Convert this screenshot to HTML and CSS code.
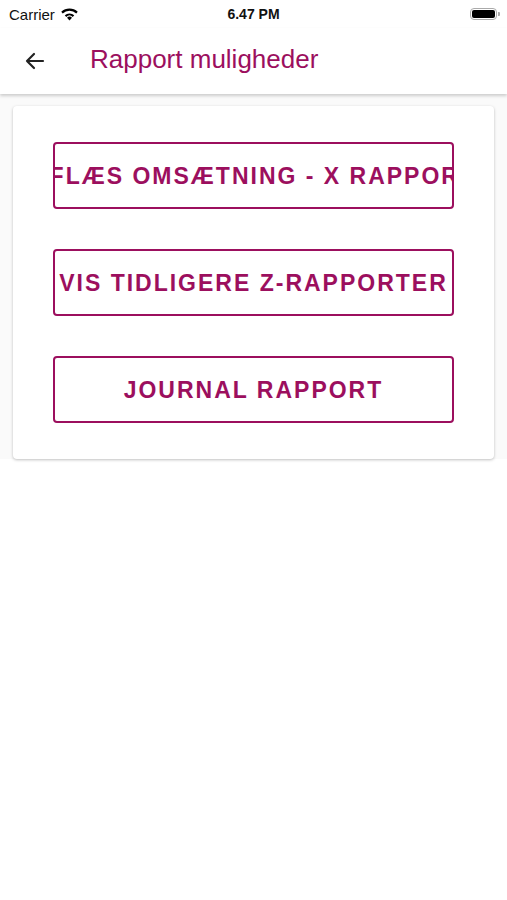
FILE: index.html
```html
<!DOCTYPE html>
<html lang="da">
<head>
    <meta charset="UTF-8">
    <meta name="viewport" content="width=device-width, initial-scale=1.0">
    <title>Rapport muligheder</title>
    <link rel="stylesheet" href="styles.css">
</head>
<body>
    <div class="status-bar">
        <div class="status-left">
            <span>Carrier</span>
            <svg class="wifi" viewBox="0 0 24 18" fill="#000">
                <path d="M12 17.5l3.2-3.6a4.6 4.6 0 0 0-6.4 0z"/>
                <path d="M12 8.2a9 9 0 0 1 6.1 2.4l-1.9 2.1a6.2 6.2 0 0 0-8.4 0l-1.9-2.1A9 9 0 0 1 12 8.2z"/>
                <path d="M12 2a15.5 15.5 0 0 1 10.6 4.2l-1.9 2.1a12.6 12.6 0 0 0-17.4 0L1.4 6.2A15.5 15.5 0 0 1 12 2z"/>
            </svg>
        </div>
        <div class="status-time">6.47 PM</div>
        <div class="status-right">
            <div class="battery"><div class="battery-level"></div></div>
            <div class="battery-tip"></div>
        </div>
    </div>

    <header class="app-bar">
        <svg class="back" viewBox="0 0 24 24" fill="none" stroke="#222" stroke-width="2.2" stroke-linecap="round" stroke-linejoin="round">
            <path d="M20 12H4M11 5l-7 7 7 7"/>
        </svg>
        <h1 class="title">Rapport muligheder</h1>
    </header>

    <main class="content">
        <div class="card">
            <button class="report-btn"><span>AFLÆS OMSÆTNING - X RAPPORT</span></button>
            <button class="report-btn"><span>VIS TIDLIGERE Z-RAPPORTER</span></button>
            <button class="report-btn"><span>JOURNAL RAPPORT</span></button>
        </div>
    </main>
</body>
</html>
```

FILE: styles.css
```css
:root {
    --primary: #9c0f5e;
    --background: #ffffff;
}

* {
    box-sizing: border-box;
    margin: 0;
    padding: 0;
}

body {
    background: var(--background);
    font-family: "Liberation Sans", Arial, sans-serif;
    width: 507px;
    height: 900px;
    overflow: hidden;
}

.status-bar {
    height: 28px;
    display: flex;
    align-items: center;
    justify-content: space-between;
    padding: 0 7px 0 9px;
    font-size: 15px;
    color: #111;
    position: relative;
}

.status-left {
    display: flex;
    align-items: center;
    gap: 5px;
}

.wifi {
    width: 19px;
    height: 14px;
}

.status-time {
    position: absolute;
    left: 0;
    right: 0;
    text-align: center;
    font-weight: bold;
    font-size: 14px;
    pointer-events: none;
}

.status-right {
    display: flex;
    align-items: center;
}

.battery {
    width: 27px;
    height: 12px;
    border: 1px solid #aaa;
    border-radius: 4px;
    padding: 1px;
}

.battery-level {
    width: 100%;
    height: 100%;
    background: #000;
    border-radius: 2px;
}

.battery-tip {
    width: 2px;
    height: 4px;
    background: #aaa;
    border-radius: 0 1px 1px 0;
    margin-left: 1px;
}

.app-bar {
    height: 66px;
    display: flex;
    align-items: center;
    padding-left: 23px;
    background: #fff;
    box-shadow: 0 2px 3px rgba(0, 0, 0, 0.18);
    position: relative;
    z-index: 1;
}

.back {
    width: 24px;
    height: 24px;
}

.title {
    color: var(--primary);
    font-size: 26px;
    font-weight: normal;
    margin-left: 43px;
    margin-top: -3px;
}

.content {
    background: #fafafa;
    padding: 12px 13px 0;
}

.card {
    background: #fff;
    border-radius: 4px;
    box-shadow: 0 1px 3px rgba(0, 0, 0, 0.25);
    padding: 36px 40px 36px;
    display: flex;
    flex-direction: column;
    gap: 40px;
}

.report-btn {
    height: 67px;
    border: 2px solid var(--primary);
    border-radius: 4px;
    background: #fff;
    color: var(--primary);
    font-family: "Liberation Sans", Arial, sans-serif;
    font-size: 23px;
    font-weight: bold;
    letter-spacing: 2px;
    display: flex;
    align-items: center;
    justify-content: center;
    overflow: hidden;
    white-space: nowrap;
}

.report-btn span {
    flex-shrink: 0;
    margin-top: 2px;
}
```
